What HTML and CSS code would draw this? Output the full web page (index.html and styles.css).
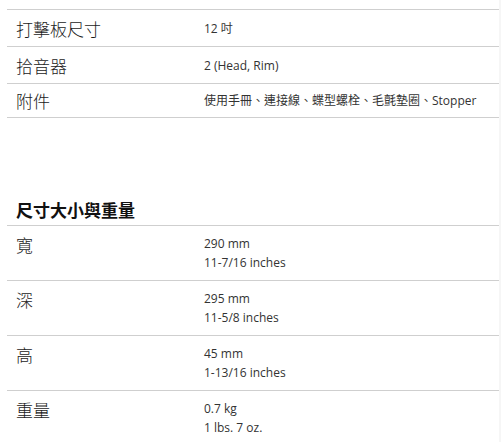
FILE: index.html
```html
<!DOCTYPE html>
<html lang="zh-Hant">
<head>
  <meta charset="UTF-8">
  <meta name="viewport" content="width=device-width, initial-scale=1.0">
  <title>規格</title>
  <link rel="stylesheet" href="styles.css">
</head>
<body>
  <div class="page">
    <div class="spec-table">
      <div class="spec-row">
        <div class="spec-label">打擊板尺寸</div>
        <div class="spec-value">12 吋</div>
      </div>
      <div class="spec-row">
        <div class="spec-label">拾音器</div>
        <div class="spec-value">2 (Head, Rim)</div>
      </div>
      <div class="spec-row spec-row--compact">
        <div class="spec-label">附件</div>
        <div class="spec-value">使用手冊、連接線、蝶型螺栓、毛氈墊圈、Stopper</div>
      </div>
    </div>

    <h2 class="spec-heading">尺寸大小與重量</h2>
    <div class="spec-table spec-table--sizes">
      <div class="spec-row">
        <div class="spec-label">寬</div>
        <div class="spec-value">290 mm<br>11-7/16 inches</div>
      </div>
      <div class="spec-row">
        <div class="spec-label">深</div>
        <div class="spec-value">295 mm<br>11-5/8 inches</div>
      </div>
      <div class="spec-row">
        <div class="spec-label">高</div>
        <div class="spec-value">45 mm<br>1-13/16 inches</div>
      </div>
      <div class="spec-row">
        <div class="spec-label">重量</div>
        <div class="spec-value">0.7 kg<br>1 lbs. 7 oz.</div>
      </div>
    </div>
  </div>
</body>
</html>
```

FILE: styles.css
```css
html {
  background-color: #f6f6f6;
}
body {
  margin: 0;
  width: 499px;
  min-height: 442px;
  background-color: #fff;
  font-family: 'Open Sans', 'Noto Sans CJK TC', sans-serif;
  color: #222;
}
.page {
  padding: 9px 0 0 7px;
  width: 492px;
}
.spec-table {
  border-top: 1px solid #cfcfcf;
}
.spec-table--sizes {
  border-top: none;
}
.spec-row {
  display: grid;
  grid-template-columns: 188px 1fr;
  align-items: center;
  padding: 9px 0 8px 9px;
  border-bottom: 1px solid #cfcfcf;
}
.spec-row--compact {
  padding: 7px 0 7px 9px;
}
.spec-table--sizes .spec-row {
  align-items: start;
  padding: 9px 0 8px 9px;
}
.spec-label {
  font-family: 'Noto Sans CJK TC', sans-serif;
  font-size: 17px;
  font-weight: 300;
  line-height: 19px;
  color: #1a1a1a;
}
.spec-value {
  font-family: 'Open Sans', 'Noto Sans CJK TC', sans-serif;
  font-size: 12px;
  line-height: 19px;
  color: #333;
}
.spec-table--sizes .spec-value {
  line-height: 18.5px;
}
.spec-heading {
  margin: 80px 0 0;
  padding: 0 0 3px 9px;
  font-family: 'Noto Sans CJK TC', sans-serif;
  font-size: 17px;
  font-weight: 700;
  line-height: 24px;
  color: #111;
  border-bottom: 1px solid #cfcfcf;
}
```
